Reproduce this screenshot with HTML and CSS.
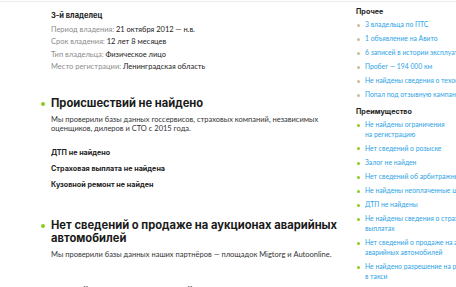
FILE: index.html
```html
<!DOCTYPE html>
<html lang="ru">
<head>
  <meta charset="UTF-8" />
  <meta name="viewport" content="width=device-width, initial-scale=1.0"/>
  <title>Отчёт по автомобилю</title>
  <link rel="stylesheet" href="styles.css">
</head>
<body>

<div class="topline"></div>

<div class="page">
  <div class="main">

    <!-- Владелец -->
    <div class="owner">
      <div class="owner-title">3-й владелец</div>
      <div class="owner-row"><span class="label">Период владения:</span> 21 октября 2012 — н.в.</div>
      <div class="owner-row"><span class="label">Срок владения:</span> 12 лет 8 месяцев</div>
      <div class="owner-row"><span class="label">Тип владельца:</span> Физическое лицо</div>
      <div class="owner-row"><span class="label">Место регистрации:</span> Ленинградская область</div>
    </div>

    <div class="section">
      <h2 class="section-title">Происшествий не найдено</h2>
      <p class="section-text">Мы проверили базы данных госсервисов, страховых компаний, независимых оценщиков, дилеров и СТО с 2015 года.</p>
      <ul class="checks">
        <li>ДТП не найдено</li>
        <li>Страховая выплата не найдена</li>
        <li>Кузовной ремонт не найден</li>
      </ul>
    </div>

    <div class="section section-auction">
      <h2 class="section-title">Нет сведений о продаже на аукционах аварийных автомобилей</h2>
      <p class="section-text">Мы проверили базы данных наших партнёров — площадок Migtorg и Autoonline.</p>
    </div>

    <div class="section section-next">
      <h2 class="section-title">Не найдено ограничений на регистрацию</h2>
    </div>

  </div>

  <div class="sidebar">
    <div class="side-group">
      <h4>Прочее</h4>
      <ul class="side-list other">
        <li><a href="#">3 владельца по ПТС</a></li>
        <li><a href="#">1 объявление на Авито</a></li>
        <li><a href="#">6 записей в истории эксплуатации</a></li>
        <li><a href="#">Пробег — 194&nbsp;000 км</a></li>
        <li><a href="#">Не найдены сведения о техосмотрах</a></li>
        <li><a href="#">Попал под отзывную кампанию</a></li>
      </ul>
    </div>

    <div class="side-group">
      <h4>Преимущество</h4>
      <ul class="side-list good">
        <li><a href="#">Не найдены ограничения<br>на регистрацию</a></li>
        <li><a href="#">Нет сведений о розыске</a></li>
        <li><a href="#">Залог не найден</a></li>
        <li><a href="#">Нет сведений об арбитражных делах</a></li>
        <li><a href="#">Не найдены неоплаченные штрафы</a></li>
        <li><a href="#">ДТП не найдены</a></li>
        <li><a href="#">Не найдены сведения о страховых<br>выплатах</a></li>
        <li><a href="#">Нет сведений о продаже на аукционах<br>аварийных автомобилей</a></li>
        <li><a href="#">Не найдено разрешение на работу<br>в такси</a></li>
        <li><a href="#">Не найдены сведения о залоге</a></li>
      </ul>
    </div>
  </div>
</div>

</body>
</html>
```

FILE: styles.css
```css
html, body {
  margin: 0;
  padding: 0;
  overflow: hidden;
}

body {
  font-family: Lato, "Open Sans", sans-serif;
  background-color: #ffffff;
  color: #222;
}

.topline {
  height: 1px;
  border-bottom: 1px solid #ececec;
}

.page {
  display: flex;
  gap: 15px;
  padding: 5px 0 0 51px;
  width: 650px;
}

.main {
  width: 290px;
  flex-shrink: 0;
}

/* owner block */
.owner-title {
  font-family: Inter, sans-serif;
  font-weight: 700;
  font-size: 7.5px;
  line-height: 12px;
  margin-top: 3px;
}

.owner-row {
  font-size: 7.5px;
  line-height: 12.3px;
}

.owner-title + .owner-row {
  margin-top: 2px;
}

.label {
  color: #8c8c8c;
}

/* sections */
.section {
  margin-top: 24px;
}

.section-title {
  position: relative;
  margin: 0;
  font-family: Inter, sans-serif;
  font-weight: 700;
  font-size: 11.2px;
  line-height: 13.5px;
  color: #1a1a1a;
}

.section-title::before {
  content: "";
  position: absolute;
  left: -10px;
  top: 5px;
  width: 4px;
  height: 4px;
  border-radius: 50%;
  background-color: #8ccc1e;
}

.section-text {
  margin: 4px 0 0;
  font-size: 7.5px;
  line-height: 9.5px;
  color: #333;
}

.checks {
  list-style: none;
  margin: 11px 0 0;
  padding: 0;
}

.checks li {
  font-family: Inter, sans-serif;
  font-weight: 700;
  font-size: 7.2px;
  line-height: 16px;
}

.section-auction {
  margin-top: 26px;
}

.section-next {
  margin-top: 27px;
}

/* sidebar */
.sidebar {
  width: 160px;
  flex-shrink: 0;
}

.side-group h4 {
  margin: 0 0 3px;
  font-family: Inter, sans-serif;
  font-weight: 700;
  font-size: 7.2px;
  line-height: 10px;
}

.side-group + .side-group {
  margin-top: 7px;
}

.side-list {
  list-style: none;
  margin: 0;
  padding: 0;
}

.side-list li {
  position: relative;
  padding-left: 9px;
  font-size: 6.8px;
  line-height: 9.7px;
  margin-bottom: 4.4px;
}

.side-list li::before {
  content: "";
  position: absolute;
  left: 1px;
  top: 3.5px;
  width: 3px;
  height: 3px;
  border-radius: 50%;
}

.side-list.other li::before {
  background-color: #c8bc9c;
}

.side-list.good li::before {
  background-color: #8ccc1e;
}

.side-list a {
  color: #2ea3e6;
  text-decoration: none;
}
```
